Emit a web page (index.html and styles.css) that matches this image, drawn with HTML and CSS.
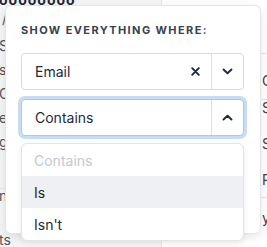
FILE: index.html
```html
<!DOCTYPE html>
<html>
<head>
<meta charset="utf-8">
<link rel="stylesheet" href="styles.css">
</head>
<body>
<div class="page">
  <aside class="sidebar">
    <div class="side-head">oooooooo</div>
    <div class="side-item slash">/</div>
    <div class="side-item">Sales</div>
    <div class="side-item">sync</div>
    <div class="side-item">Contacts</div>
    <div class="side-item">emails</div>
    <div class="side-item">gallery</div>
    <div class="side-item sep">notes</div>
    <div class="side-item">ts</div>
  </aside>
  <main class="main">
    <div class="row r1"></div>
    <div class="row r2">Co</div>
    <div class="row r3">St</div>
    <div class="row r4">Sa</div>
    <div class="row r5">Pa</div>
    <div class="row r6">ye</div>
  </main>
</div>

<div class="popover">
  <div class="title">SHOW EVERYTHING WHERE:</div>
  <div class="select">
    <div class="value">Email</div>
    <div class="clear">
      <svg width="9" height="9" viewBox="0 0 9 9"><path d="M1.2 1.2 L7.8 7.8 M7.8 1.2 L1.2 7.8" stroke="#1f2937" stroke-width="1.9" stroke-linecap="round"/></svg>
    </div>
    <div class="arrow">
      <svg width="11" height="7" viewBox="0 0 11 7"><path d="M1.5 1.5 L5.5 5.3 L9.5 1.5" fill="none" stroke="#1f2937" stroke-width="1.9" stroke-linecap="round" stroke-linejoin="round"/></svg>
    </div>
  </div>
  <div class="select focused">
    <div class="value">Contains</div>
    <div class="arrow">
      <svg width="11" height="7" viewBox="0 0 11 7"><path d="M1.5 5.5 L5.5 1.7 L9.5 5.5" fill="none" stroke="#1f2937" stroke-width="1.9" stroke-linecap="round" stroke-linejoin="round"/></svg>
    </div>
    <div class="menu">
      <div class="option placeholder">Contains</div>
      <div class="option active">Is</div>
      <div class="option">Isn't</div>
    </div>
  </div>
</div>
</body>
</html>
```
FILE: styles.css
```css
* { box-sizing: border-box; }
html, body {
  margin: 0;
  padding: 0;
  width: 267px;
  height: 247px;
  overflow: hidden;
  font-family: Inter, "Liberation Sans", sans-serif;
  color: #1f2937;
  background: #fff;
}
.page {
  display: flex;
  height: 247px;
}
.sidebar {
  width: 162px;
  flex: none;
  background: #f4f5f7;
  border-right: 1px solid #e5e7eb;
  font-size: 14px;
  color: #4b5563;
}
.side-head {
  font-weight: 700;
  color: #1f2937;
  height: 6px;
  line-height: 0;
  overflow: hidden;
  margin-left: -1px;
  letter-spacing: 1px;
}
.side-item {
  height: 24px;
  line-height: 24px;
  margin-left: -1px;
  white-space: nowrap;
}
.side-item.slash { height: 28px; line-height: 26px; margin-left: 2px; }
.side-item.sep {
  border-top: 1px solid #e5e7eb;
  margin-top: 34px;
  height: 40px;
  line-height: 14px;
}
.main {
  flex: 1;
  font-size: 14px;
  color: #374151;
  padding-left: 100px;
  white-space: nowrap;
}
.row {
  margin-left: -100px;
  padding-left: 100px;
}
.r1 { height: 54px; border-bottom: 1px solid #e5e7eb; }
.r2 { height: 46px; line-height: 54px; border-bottom: 1px solid #e5e7eb; }
.r3 { height: 26px; line-height: 16px; }
.r4 { height: 36px; line-height: 36px; }
.r5 { height: 36px; line-height: 36px; border-bottom: 1px solid #e5e7eb; }
.r6 { height: 40px; line-height: 40px; }

.popover {
  position: absolute;
  left: 5px;
  top: 5px;
  width: 256px;
  height: 229px;
  background: #fff;
  border: 1px solid #e3e5e8;
  border-radius: 6px;
  box-shadow: 0 3px 10px rgba(0, 0, 0, 0.10);
  padding: 16px 16px 0 15px;
}
.title {
  font-size: 11px;
  font-weight: 700;
  letter-spacing: 1.4px;
  line-height: 16px;
  color: #374151;
  margin-bottom: 15px;
  white-space: nowrap;
}
.select {
  position: relative;
  display: flex;
  height: 37px;
  border: 1px solid #d6d9de;
  border-radius: 4px;
  background: #fff;
  font-size: 14px;
}
.select + .select { margin-top: 9px; }
.select.focused {
  border-color: #a9c9ef;
  box-shadow: 0 0 0 3px #c7ddf7;
}
.value {
  flex: 1;
  display: flex;
  align-items: center;
  padding-left: 13px;
  color: #1f2937;
}
.clear {
  width: 32px;
  display: flex;
  align-items: center;
  justify-content: center;
}
.arrow {
  width: 32px;
  display: flex;
  align-items: center;
  justify-content: center;
  border-left: 1px solid #dcdfe3;
}
.menu {
  position: absolute;
  top: calc(100% + 8px);
  left: -1px;
  right: -1px;
  background: #fff;
  border: 1px solid #e3e5e8;
  border-radius: 6px;
  box-shadow: 0 2px 6px rgba(0, 0, 0, 0.08);
  overflow: hidden;
}
.option {
  height: 32px;
  display: flex;
  align-items: center;
  padding-left: 12px;
  color: #1f2937;
}
.option.placeholder { color: #c4c8ce; }
.option.active { background: #eef0f3; }
```
